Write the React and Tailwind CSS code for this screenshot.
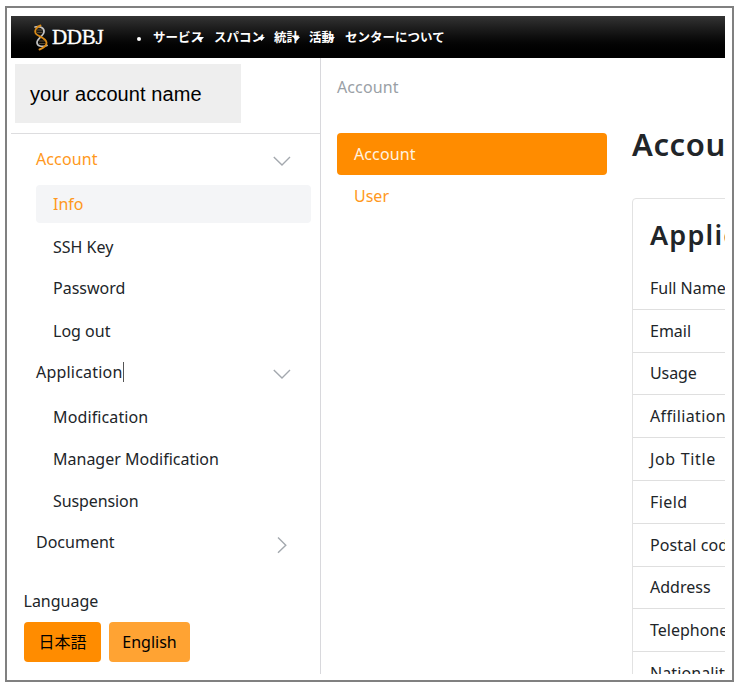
import React from "react";

const UI = "font-['Noto_Sans','Noto_Sans_CJK_JP',sans-serif]";

function Chevron({ right, className }) {
  return (
    <svg width="18" height="18" viewBox="0 0 18 18" fill="none" stroke="#a3a8ae" strokeWidth="1.4" className={className}>
      <path d={right ? "M5 1.5 L12.8 9.2 L5 16.8" : "M0.8 5 L9 13 L17 5"} />
    </svg>
  );
}

function Logo() {
  return (
    <svg width="16" height="27" viewBox="0 0 16 27" fill="none" strokeLinecap="round">
      <path d="M2 3 C7 1.5 11.5 4 11 8 C10.5 12 4 14.5 4 18.5 C4 22 8.5 23.5 14 21.5" stroke="#c4c4c4" strokeWidth="1.7" />
      <path d="M7.5 1.5 C3.5 3 1.5 6 2.5 9 C4 12.5 13 13.5 13.5 18.5 C13.7 22 10.5 24 6.5 25.5" stroke="#d98a17" strokeWidth="1.9" />
      <path d="M4.5 6h4.5M4.5 8.500h4.500M6.500 17h5M6.500 19.500h5" stroke="#8b7448" strokeWidth="0.6" />
    </svg>
  );
}

const nav = [
  ["サービス", "w-[61px]", "left-[44px]"],
  ["スパコン", "w-[60px]", "left-[44px]"],
  ["統計", "w-[35px]", "left-[19px]"],
  ["活動", "w-[36px]", "left-[19px]"],
  ["センターについて", "w-[110px]", null],
];

const fields = [
  ["Full Name", ""],
  ["Email", ""],
  ["Usage", "tracking-[-0.1px]"],
  ["Affiliation", "tracking-[0.35px]"],
  ["Job Title", "tracking-[0.65px]"],
  ["Field", "tracking-[0.4px]"],
  ["Postal code", "tracking-[0.1px]"],
  ["Address", ""],
  ["Telephone", ""],
  ["Nationality", "tracking-[0.1px]"],
];

function Header() {
  return (
    <header className="flex h-[42px] shrink-0 items-center bg-linear-to-b from-[#343434] to-black pl-[22px] text-white">
      <Logo />
      <span className="ml-[3px] w-[83px] font-['Liberation_Serif',serif] text-[21px] leading-none tracking-[-0.3px] [-webkit-text-stroke:0.35px_white]">DDBJ</span>
      <span className="mt-[3px] mr-[12px] ml-[2px] size-[4px] rounded-full bg-white" />
      <nav className="flex font-['Noto_Sans_CJK_JP',sans-serif] text-[12.5px] font-bold whitespace-nowrap">
        {nav.map(([label, width, caret]) => (
          <a key={label} className={"relative " + width}>
            {label}
            {caret && (
              <svg width="7" height="4" viewBox="0 0 7 4" className={"absolute top-[9px] " + caret}>
                <path d="M0 0h7L3.500 4z" fill="white" />
              </svg>
            )}
          </a>
        ))}
      </nav>
    </header>
  );
}

function Sub({ children, className }) {
  return <div className={"flex items-center pl-[42px] " + className}>{children}</div>;
}

function Sidebar() {
  return (
    <aside className="flex w-[310px] shrink-0 flex-col border-r border-[#d8d8dc]">
      <div className="flex h-[76px] shrink-0 border-b border-[#dddddf] pt-[6px] pl-[4px]">
        <div className="flex h-[59px] w-[226px] items-center bg-[#eeeeee] pl-[15px] font-['Liberation_Sans',sans-serif] text-[20px] tracking-[0.1px] text-black">
          your account name
        </div>
      </div>
      <div className="flex h-[51px] shrink-0 items-center justify-between pr-[29px] pl-[25px] text-[#ff9820]">
        <span className="pb-[2px] tracking-[0.1px]">Account</span> <Chevron className="mt-[2px]" />
      </div>
      <div className="ml-[25px] flex h-[38px] w-[275px] shrink-0 items-center rounded-[4px] bg-[#f4f5f7] pl-[17px] text-[#ff9820]">Info</div>
      <Sub className="mt-[3px] h-[42px]">SSH Key</Sub>
      <Sub className="h-[41px] pb-[2px]">Password</Sub>
      <Sub className="h-[43px]">Log out</Sub>
      <div className="flex h-[41px] items-center justify-between pr-[29px] pl-[25px]">
        <span className="flex items-center pb-[2px] tracking-[0.2px]">Application<i className="h-[20px] w-px bg-[#555]" /></span>
        <Chevron className="mt-[2px]" />
      </div>
      <Sub className="mt-[2px] h-[43px] tracking-[0.12px]">Modification</Sub>
      <Sub className="h-[42px]">Manager Modification</Sub>
      <Sub className="h-[42px] tracking-[-0.1px]">Suspension</Sub>
      <div className="flex h-[41px] items-center justify-between pr-[29px] pl-[25px]">
        <span className="pb-[2px]">Document</span> <Chevron right className="mt-[5px]" />
      </div>
      <div className="mt-[19px] flex h-[40px] items-center pb-[2px] pl-[12.500px]">Language</div>
      <div className="flex gap-[8px] pl-[13px] text-black">
        <button className="h-[40px] w-[77px] rounded-[4px] bg-[#ff8c00]">日本語</button>
        <button className="h-[40px] w-[81px] rounded-[4px] bg-[#ffa333]">English</button>
      </div>
    </aside>
  );
}

function Content() {
  return (
    <main className="flex min-w-0 flex-1 flex-col overflow-hidden pl-[16px]">
      <div className="flex h-[58px] shrink-0 items-center tracking-[0.1px] text-[#9a9fa6]">Account</div>
      <div className="mt-[17px] flex">
        <div className="w-[270px] shrink-0">
          <div className="flex h-[42px] items-center rounded-[4px] bg-[#ff8c00] pl-[17px] tracking-[0.1px] text-[#fff3e0]">Account</div>
          <div className="flex h-[42px] items-center pb-[1px] pl-[17px] text-[#ff9820]">User</div>
        </div>
        <section className="ml-[25px] w-[400px] shrink-0">
          <h1 className="h-[65px] text-[31px] leading-[23px] font-semibold tracking-[0.6px]">Account</h1>
          <div className="rounded-[4px] border border-[#e2e2e2]">
            <h2 className="h-[68px] pl-[17px] text-[27px] leading-[71px] font-semibold tracking-[1.2px]">Application</h2>
            {fields.map(([label, tracking]) => (
              <div key={label} className={"flex h-[42.8px] items-center border-b border-[#dfdfdf] pl-[17px] whitespace-nowrap " + tracking}>{label}</div>
            ))}
          </div>
        </section>
      </div>
    </main>
  );
}

export default function App() {
  return (
    <div className="h-[686px] w-[738px] bg-white pt-[6px] pl-[5px]">
      <div className={"h-[676px] w-[729px] border-2 border-[#808080] pt-[8px] pl-[4px] text-[16px] text-[#212529] " + UI}>
        <div className="flex h-[658px] w-[714px] flex-col overflow-hidden">
          <Header />
          <div className="flex min-h-0 flex-1 overflow-hidden">
            <Sidebar />
            <Content />
          </div>
        </div>
      </div>
    </div>
  );
}
